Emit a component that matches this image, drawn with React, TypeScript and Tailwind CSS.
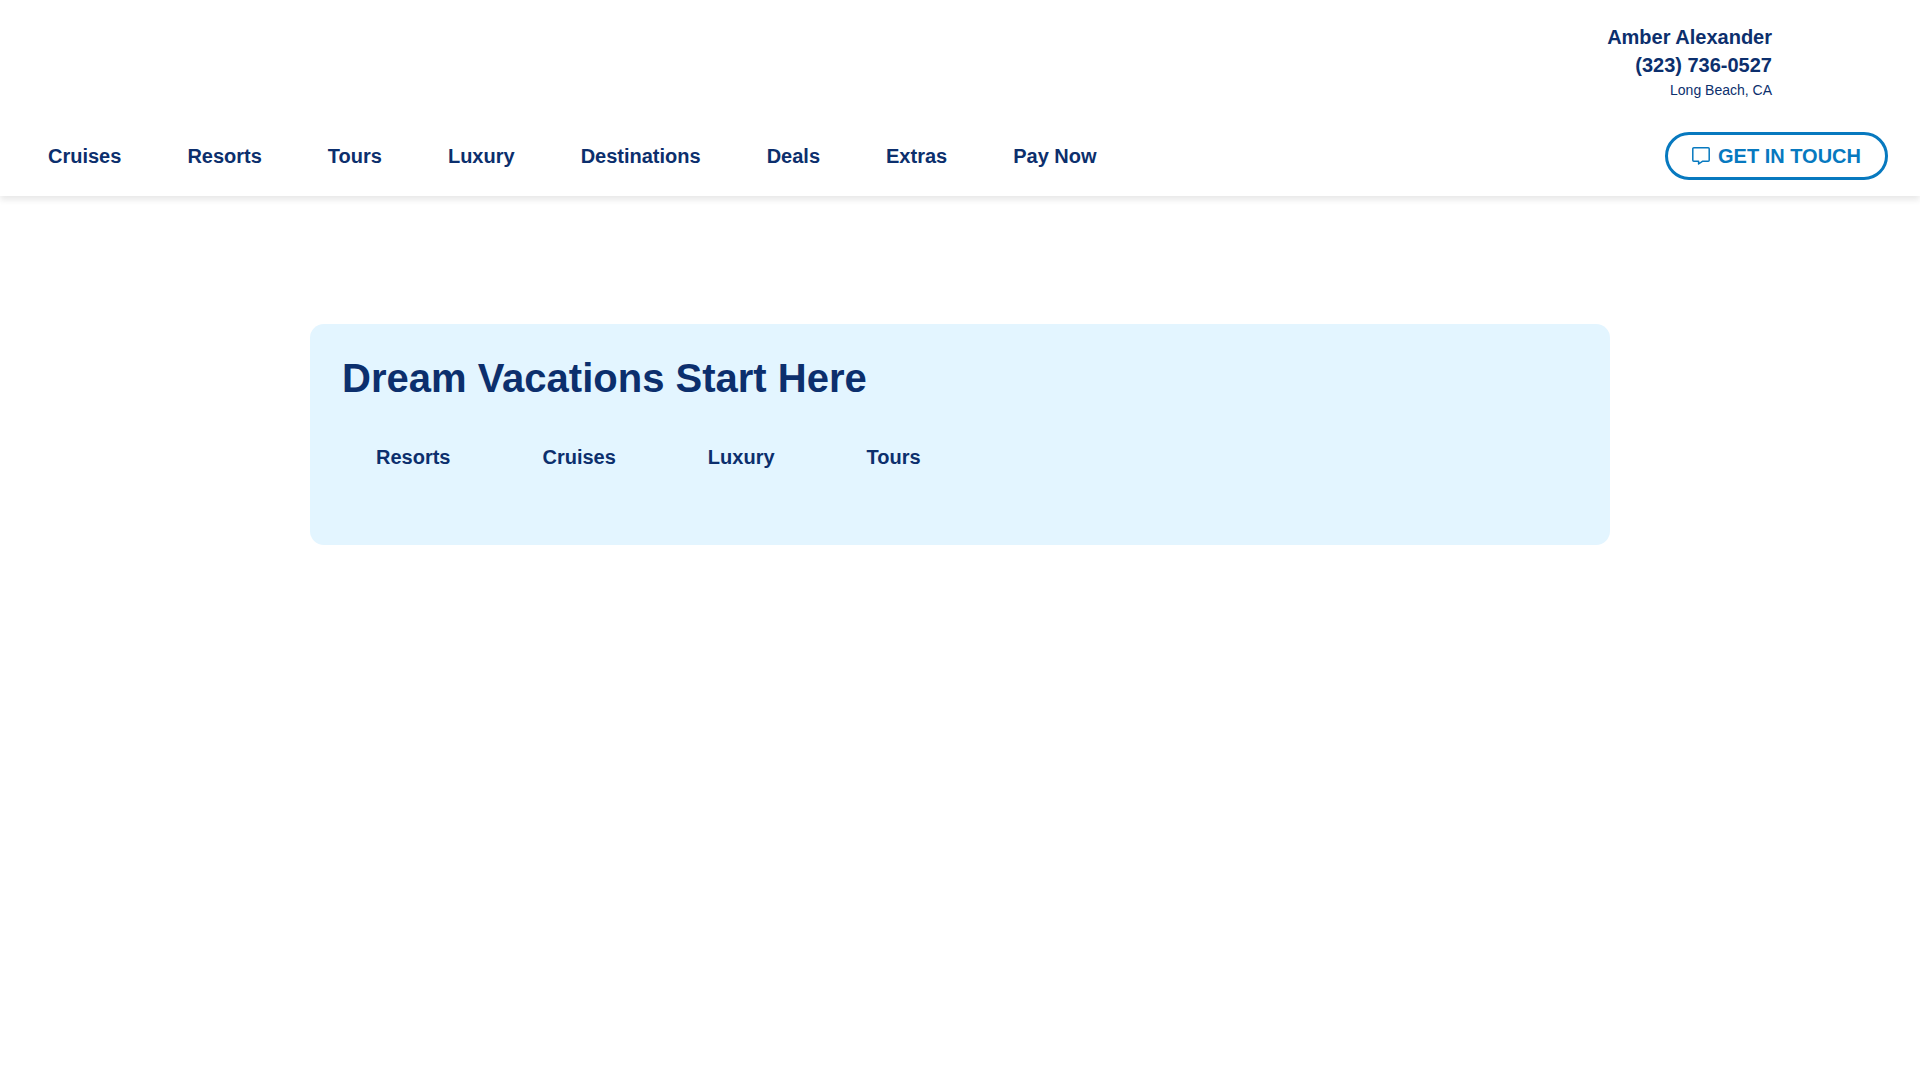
const navLinks = ["Cruises", "Resorts", "Tours", "Luxury", "Destinations", "Deals", "Extras", "Pay Now"];

const vacationTypes = ["Resorts", "Cruises", "Luxury", "Tours"];

function ChatIcon() {
  return (
    <svg
      width="18"
      height="18"
      viewBox="0 0 18 18"
      fill="none"
      stroke="currentColor"
      strokeWidth="1.5"
      strokeLinejoin="round"
      aria-hidden="true"
    >
      <path d="M1.8 0.75h14.4a1 1 0 0 1 1 1v11.6a1 1 0 0 1-1 1H10.4L6.6 17V14.35H1.8a1 1 0 0 1-1-1V1.75a1 1 0 0 1 1-1z" />
    </svg>
  );
}

function Header() {
  return (
    <header className="w-full bg-white pb-4 shadow-[0_4px_6px_rgba(0,0,0,0.09)]">
      {/* Agent contact */}
      <div className="flex flex-col items-end pt-[23px] pr-37 pb-[31px]">
        <p className="text-xl font-bold">Amber Alexander</p>
        <a href="tel:3237360527" className="text-xl font-bold">
          (323) 736-0527
        </a>
        <p className="text-sm leading-[22px]">Long Beach, CA</p>
      </div>

      <div className="flex items-center justify-between pl-12 pr-8">
        <nav className="flex items-center gap-[66px] text-xl font-bold">
          {navLinks.map((label) => (
            <a key={label} href="#" className="hover:underline">
              {label}
            </a>
          ))}
        </nav>

        <button
          type="button"
          className="flex h-12 items-center gap-2 rounded-full border-3 border-[#0779bf] px-6 text-xl font-bold text-[#0779bf] hover:bg-[#e3f5ff]"
        >
          <ChatIcon />
          GET IN TOUCH
        </button>
      </div>
    </header>
  );
}

export default function App() {
  return (
    <div className="min-h-screen bg-white font-['Liberation_Sans',Arial,sans-serif] text-[#0c2f6d]">
      <Header />

      <main className="px-8 pt-32">
        <section className="mx-auto max-w-[1300px] rounded-[14px] bg-[#e3f5ff] px-8 pt-8 pb-[74px]">
          <h1 className="text-[40px] leading-11 font-bold">Dream Vacations Start Here</h1>
          <ul className="mt-[43px] flex gap-[92px] px-[34px] text-xl font-bold">
            {vacationTypes.map((label) => (
              <li key={label}>
                <a href="#" className="hover:underline">
                  {label}
                </a>
              </li>
            ))}
          </ul>
        </section>
      </main>
    </div>
  );
}
